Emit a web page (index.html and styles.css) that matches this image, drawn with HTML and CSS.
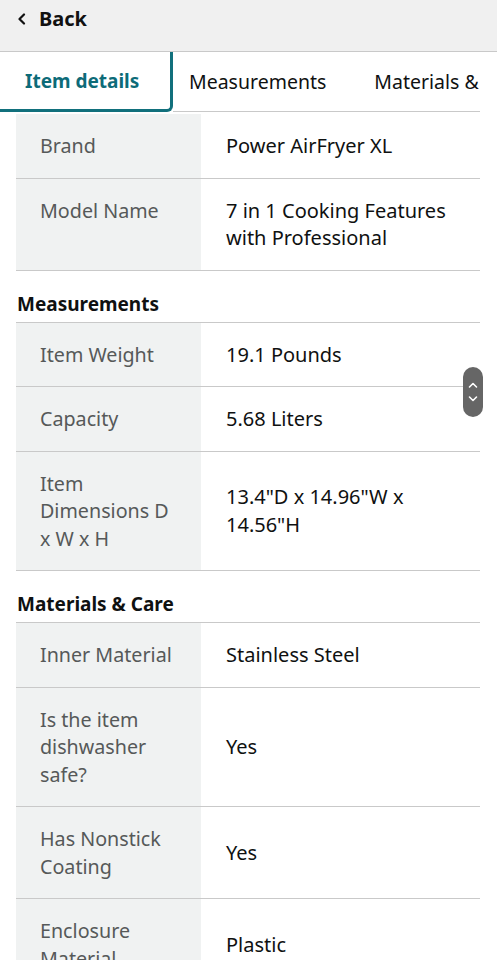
FILE: index.html
```html
<!DOCTYPE html>
<html lang="en">
<head>
<meta charset="utf-8">
<title>Item details</title>
<link rel="stylesheet" href="styles.css">
</head>
<body>
<header class="topbar">
  <svg class="back-icon" width="10" height="12" viewBox="0 0 10 12"><path d="M7 1.5 L2.5 6 L7 10.5" fill="none" stroke="#111" stroke-width="2.2" stroke-linecap="round" stroke-linejoin="round"/></svg>
  <span class="back-label">Back</span>
</header>
<nav class="tabs">
  <div class="tab tab-active">Item details</div>
  <div class="tab-rest">
    <div class="tab">Measurements</div>
    <div class="tab">Materials &amp;</div>
  </div>
</nav>
<main class="content">
  <section class="table">
    <div class="row"><div class="label">Brand</div><div class="value">Power AirFryer XL</div></div>
    <div class="row"><div class="label">Model Name</div><div class="value">7 in 1 Cooking Features with Professional</div></div>
  </section>
  <h2 class="section-title">Measurements</h2>
  <section class="table">
    <div class="row"><div class="label">Item Weight</div><div class="value">19.1 Pounds</div></div>
    <div class="row"><div class="label">Capacity</div><div class="value">5.68 Liters</div></div>
    <div class="row"><div class="label">Item Dimensions D x W x H</div><div class="value">13.4"D x 14.96"W x 14.56"H</div></div>
  </section>
  <h2 class="section-title">Materials &amp; Care</h2>
  <section class="table">
    <div class="row"><div class="label">Inner Material</div><div class="value">Stainless Steel</div></div>
    <div class="row"><div class="label">Is the item dishwasher safe?</div><div class="value">Yes</div></div>
    <div class="row"><div class="label">Has Nonstick Coating</div><div class="value">Yes</div></div>
    <div class="row"><div class="label">Enclosure Material</div><div class="value">Plastic</div></div>
  </section>
</main>
<div class="scroller">
  <svg width="20" height="50" viewBox="0 0 20 50"><path d="M6.5 20 L10 16.5 L13.5 20" fill="none" stroke="#fff" stroke-width="1.6" stroke-linecap="round" stroke-linejoin="round"/><path d="M6.5 30 L10 33.5 L13.5 30" fill="none" stroke="#fff" stroke-width="1.6" stroke-linecap="round" stroke-linejoin="round"/></svg>
</div>
</body>
</html>
```
FILE: styles.css
```css
* { box-sizing: border-box; }
html, body { margin: 0; padding: 0; }
body {
  font-family: "Noto Sans", "Open Sans", sans-serif;
  color: #0f1111;
  background: #fff;
  width: 497px;
  height: 960px;
  overflow: hidden;
}
.topbar {
  height: 52px;
  background: #f0f0f0;
  border-bottom: 1px solid #c9c9c9;
  display: flex;
  align-items: center;
  padding: 0 0 14px 17px;
  gap: 12px;
}
.back-icon { display: block; }
.back-label { font-size: 20px; font-weight: 700; color: #111; }
.tabs {
  display: flex;
  height: 60px;
  background: #fff;
}
.tab {
  font-size: 19.5px;
  white-space: nowrap;
  display: flex;
  align-items: center;
}
.tab-active {
  width: 173px;
  flex: none;
  padding-left: 25px;
  font-size: 19px;
  color: #0d6b78;
  font-weight: 700;
  border-right: 3px solid #11707c;
  border-bottom: 3px solid #11707c;
  border-bottom-right-radius: 6px;
}
.tab-rest {
  flex: 1;
  display: flex;
  gap: 48px;
  padding-left: 16px;
  margin-right: 17px;
  border-bottom: 1px solid #c9c9c9;
  overflow: hidden;
}
.content {
  padding: 2px 17px 0 16px;
}
.row {
  display: grid;
  grid-template-columns: 185px 1fr;
  border-bottom: 1px solid #c9c9c9;
  line-height: 27.5px;
}
.label {
  background: #f0f2f2;
  color: #565959;
  font-size: 19.7px;
  padding: 18px 22px 18px 24px;
}
.value {
  font-size: 20px;
  padding: 18px 16px 18px 25px;
  display: flex;
  align-items: center;
  color: #0f1111;
}
.section-title {
  margin: 0;
  font-size: 19px;
  font-weight: 700;
  line-height: 24px;
  padding: 21px 0 6px 1px;
  border-bottom: 1px solid #c9c9c9;
}
.scroller {
  position: fixed;
  left: 463px;
  top: 367px;
  width: 20px;
  height: 50px;
  border-radius: 10px;
  background: #666;
}
.scroller svg { display: block; }
```
